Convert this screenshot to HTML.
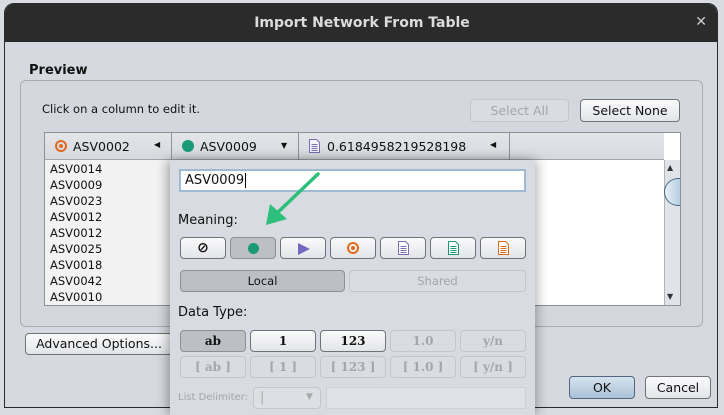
<!DOCTYPE html>
<html><head><style>
*{box-sizing:border-box;margin:0;padding:0}
body{width:724px;height:415px;overflow:hidden;background:#d9dce1;font-family:"DejaVu Sans","Liberation Sans",sans-serif;position:relative;font-size:12px;color:#111}
.a{position:absolute}
.btn{position:absolute;border:1px solid #6f7378;border-radius:4px;background:linear-gradient(#fbfbfc,#e2e4e8);text-align:center;font-size:12.5px;color:#111}
.dis{border-color:#c3c6cb;background:#d9dce1;color:#a3a6ab}
.sel{background:#bcc0c6;border-color:#8d9197}
.ser{font-family:"DejaVu Serif","Liberation Serif",serif;font-weight:bold;font-size:12px}
.row{position:absolute;left:50px;font-size:11.5px}
</style></head><body>
<div class="a" style="left:4px;top:3px;width:714px;height:405px;background:#d6d9df;border:1px solid #2b2b2b;border-radius:10px 10px 0 0;overflow:hidden">
 <div class="a" style="left:0;top:0;width:714px;height:38px;background:#2b2b2b;color:#dcdcdc;font-weight:bold;font-size:14px;text-align:center;line-height:38px">Import Network From Table</div>
 <div class="a" style="right:10px;top:10px;color:#ccc;font-size:14px">✕</div>
</div>
<div class="a" style="left:29px;top:63px;font-weight:bold;font-size:13px">Preview</div>
<div class="a" style="left:20px;top:80px;width:683px;height:247px;border:1px solid #a9acb1;border-radius:6px;background:#d4d7dd"></div>
<div class="a" style="left:42px;top:102px;font-size:11.5px">Click on a column to edit it.</div>
<div class="btn dis" style="left:470px;top:99px;width:99px;height:23px;line-height:21px">Select All</div>
<div class="btn" style="left:580px;top:99px;width:100px;height:23px;line-height:21px">Select None</div>
<div class="a" style="left:44px;top:132px;width:637px;height:174px;border:1px solid #8e9297;background:#fff"></div>
<div class="a" style="left:45px;top:133px;width:619px;height:27px;background:linear-gradient(#e3e5e9,#d6d9de);border-bottom:1px solid #a0a3a8"></div>
<div class="a" style="left:171px;top:133px;width:1px;height:27px;background:#8e9297"></div>
<div class="a" style="left:298px;top:133px;width:1px;height:27px;background:#8e9297"></div>
<div class="a" style="left:509px;top:133px;width:1px;height:27px;background:#8e9297"></div>
<div class="a" style="left:55px;top:140px;width:12px;height:12px;border:2px solid #e06a1c;border-radius:50%"><div class="a" style="left:2px;top:2px;width:4px;height:4px;background:#e06a1c;border-radius:50%"></div></div>
<div class="a" style="left:73px;top:139px;font-size:12.5px">ASV0002</div>
<div class="a" style="left:154px;top:140px;font-size:8px">◀</div>
<div class="a" style="left:182px;top:140px;width:12px;height:12px;background:#1a9a77;border-radius:50%"></div>
<div class="a" style="left:200px;top:139px;font-size:12.5px">ASV0009</div>
<div class="a" style="left:281px;top:141px;font-size:8px">▼</div>
<svg class="a" style="left:309px;top:139px" width="11" height="14"><path d="M.5 .5h7l3 3v10h-10z" fill="#f4f2fa" stroke="#7a6db0"/><path d="M2.5 5.5h6M2.5 7.5h6M2.5 9.5h6M2.5 11.5h6" stroke="#7a6db0"/></svg>
<div class="a" style="left:327px;top:139px;font-size:12.5px">0.6184958219528198</div>
<div class="a" style="left:490px;top:140px;font-size:8px">◀</div>
<div class="a" style="left:45px;top:160px;width:125px;height:145px;background:#f2f2f2"></div>
<div class="row" style="top:162px">ASV0014</div><div class="row" style="top:178px">ASV0009</div><div class="row" style="top:194px">ASV0023</div><div class="row" style="top:210px">ASV0012</div><div class="row" style="top:226px">ASV0012</div><div class="row" style="top:242px">ASV0025</div><div class="row" style="top:258px">ASV0018</div><div class="row" style="top:274px">ASV0042</div><div class="row" style="top:290px">ASV0010</div>
<div class="a" style="left:664px;top:160px;width:16px;height:145px;background:#e0e3e7;border-left:1px solid #b0b3b8"></div>
<div class="a" style="left:667px;top:163px;font-size:8px;color:#333">▲</div>
<div class="a" style="left:667px;top:292px;font-size:8px;color:#333">▼</div>
<div class="a" style="left:664px;top:178px;width:16px;height:28px;border:1px solid #4c6a86;background:linear-gradient(90deg,#e8f0f7,#b6cde0);border-right:none;border-radius:14px 0 0 14px"></div>
<div class="btn" style="left:25px;top:333px;width:148px;height:22px;line-height:20px;font-size:12.5px">Advanced Options...</div>
<div class="btn" style="left:569px;top:376px;width:66px;height:23px;line-height:21px;background:linear-gradient(#d6e3ee,#a9c1d6);border-color:#4f6780">OK</div>
<div class="btn" style="left:645px;top:376px;width:66px;height:23px;line-height:21px">Cancel</div>
<div class="a" style="left:170px;top:160px;width:365px;height:255px;background:#d8dbe1;box-shadow:-4px 0 10px rgba(0,0,0,.25),4px 0 10px rgba(0,0,0,.2)"></div>
<div class="a" style="left:179px;top:169px;width:347px;height:23px;background:#fff;border:2px solid #9fbad3;font-size:13px;padding:2px 4px;line-height:16px">ASV0009<span style="border-left:1px solid #000;margin-left:1px"></span></div>
<div class="a" style="left:178px;top:213px;font-size:13px">Meaning:</div>
<div class="btn" style="left:180px;top:237px;width:46px;height:22px;line-height:20px;font-weight:bold;font-size:14px">⊘</div>
<div class="btn sel" style="left:230px;top:237px;width:46px;height:22px"><div class="a" style="left:17px;top:5px;width:11px;height:11px;border-radius:50%;background:#1a9a77"></div></div>
<div class="btn" style="left:280px;top:237px;width:46px;height:22px"><svg class="a" style="left:17px;top:5px" width="12" height="12"><path d="M0 0L12 6L0 12z" fill="#7468c0"/></svg></div>
<div class="btn" style="left:330px;top:237px;width:46px;height:22px"><div class="a" style="left:16px;top:4px;width:12px;height:12px;border:2px solid #e06a1c;border-radius:50%"><div class="a" style="left:2px;top:2px;width:4px;height:4px;background:#e06a1c;border-radius:50%"></div></div></div>
<div class="btn" style="left:380px;top:237px;width:46px;height:22px"><svg class="a" style="left:17px;top:3px" width="11" height="14"><path d="M.5 .5h7l3 3v10h-10z" fill="#fff" stroke="#7a6db0"/><path d="M2.5 5.5h6M2.5 7.5h6M2.5 9.5h6M2.5 11.5h6" stroke="#7a6db0"/></svg></div>
<div class="btn" style="left:430px;top:237px;width:46px;height:22px"><svg class="a" style="left:17px;top:3px" width="11" height="14"><path d="M.5 .5h7l3 3v10h-10z" fill="#fff" stroke="#1a9a77"/><path d="M2.5 5.5h6M2.5 7.5h6M2.5 9.5h6M2.5 11.5h6" stroke="#1a9a77"/></svg></div>
<div class="btn" style="left:480px;top:237px;width:46px;height:22px"><svg class="a" style="left:17px;top:3px" width="11" height="14"><path d="M.5 .5h7l3 3v10h-10z" fill="#fff" stroke="#e06a1c"/><path d="M2.5 5.5h6M2.5 7.5h6M2.5 9.5h6M2.5 11.5h6" stroke="#e06a1c"/></svg></div>
<div class="btn sel" style="left:180px;top:270px;width:165px;height:22px;line-height:20px;font-size:11.5px">Local</div>
<div class="btn dis" style="left:349px;top:270px;width:177px;height:22px;line-height:20px;font-size:11.5px">Shared</div>
<div class="a" style="left:178px;top:305px;font-size:13px">Data Type:</div>
<div class="btn sel ser" style="left:180px;top:330px;width:66px;height:22px;line-height:20px">ab</div>
<div class="btn ser" style="left:250px;top:330px;width:66px;height:22px;line-height:20px">1</div>
<div class="btn ser" style="left:320px;top:330px;width:66px;height:22px;line-height:20px">123</div>
<div class="btn dis ser" style="left:390px;top:330px;width:66px;height:22px;line-height:20px">1.0</div>
<div class="btn dis ser" style="left:460px;top:330px;width:66px;height:22px;line-height:20px">y/n</div>
<div class="btn dis ser" style="left:180px;top:356px;width:66px;height:22px;line-height:20px">[ ab ]</div>
<div class="btn dis ser" style="left:250px;top:356px;width:66px;height:22px;line-height:20px">[ 1 ]</div>
<div class="btn dis ser" style="left:320px;top:356px;width:66px;height:22px;line-height:20px">[ 123 ]</div>
<div class="btn dis ser" style="left:390px;top:356px;width:66px;height:22px;line-height:20px">[ 1.0 ]</div>
<div class="btn dis ser" style="left:460px;top:356px;width:66px;height:22px;line-height:20px">[ y/n ]</div>
<div class="a" style="left:178px;top:392px;font-size:10px;color:#a3a6ab">List Delimiter:</div>
<div class="a" style="left:253px;top:387px;width:68px;height:22px;border:1px solid #c3c6cb;border-radius:4px;background:#dcdfe3"><span class="a" style="left:6px;top:2px;color:#aaa;font-size:13px">|</span><span class="a" style="left:52px;top:4px;color:#aaa;font-size:9px">▼</span></div>
<div class="a" style="left:326px;top:387px;width:200px;height:22px;border:1px solid #cdd0d4;background:#dee1e5"></div>
<svg class="a" style="left:260px;top:170px" width="64" height="64"><path d="M58 4L14 46" stroke="#2cc07a" stroke-width="3.5" stroke-linecap="round"/><path d="M6 55L10 34L27 49z" fill="#2cc07a"/></svg>
</body></html>
